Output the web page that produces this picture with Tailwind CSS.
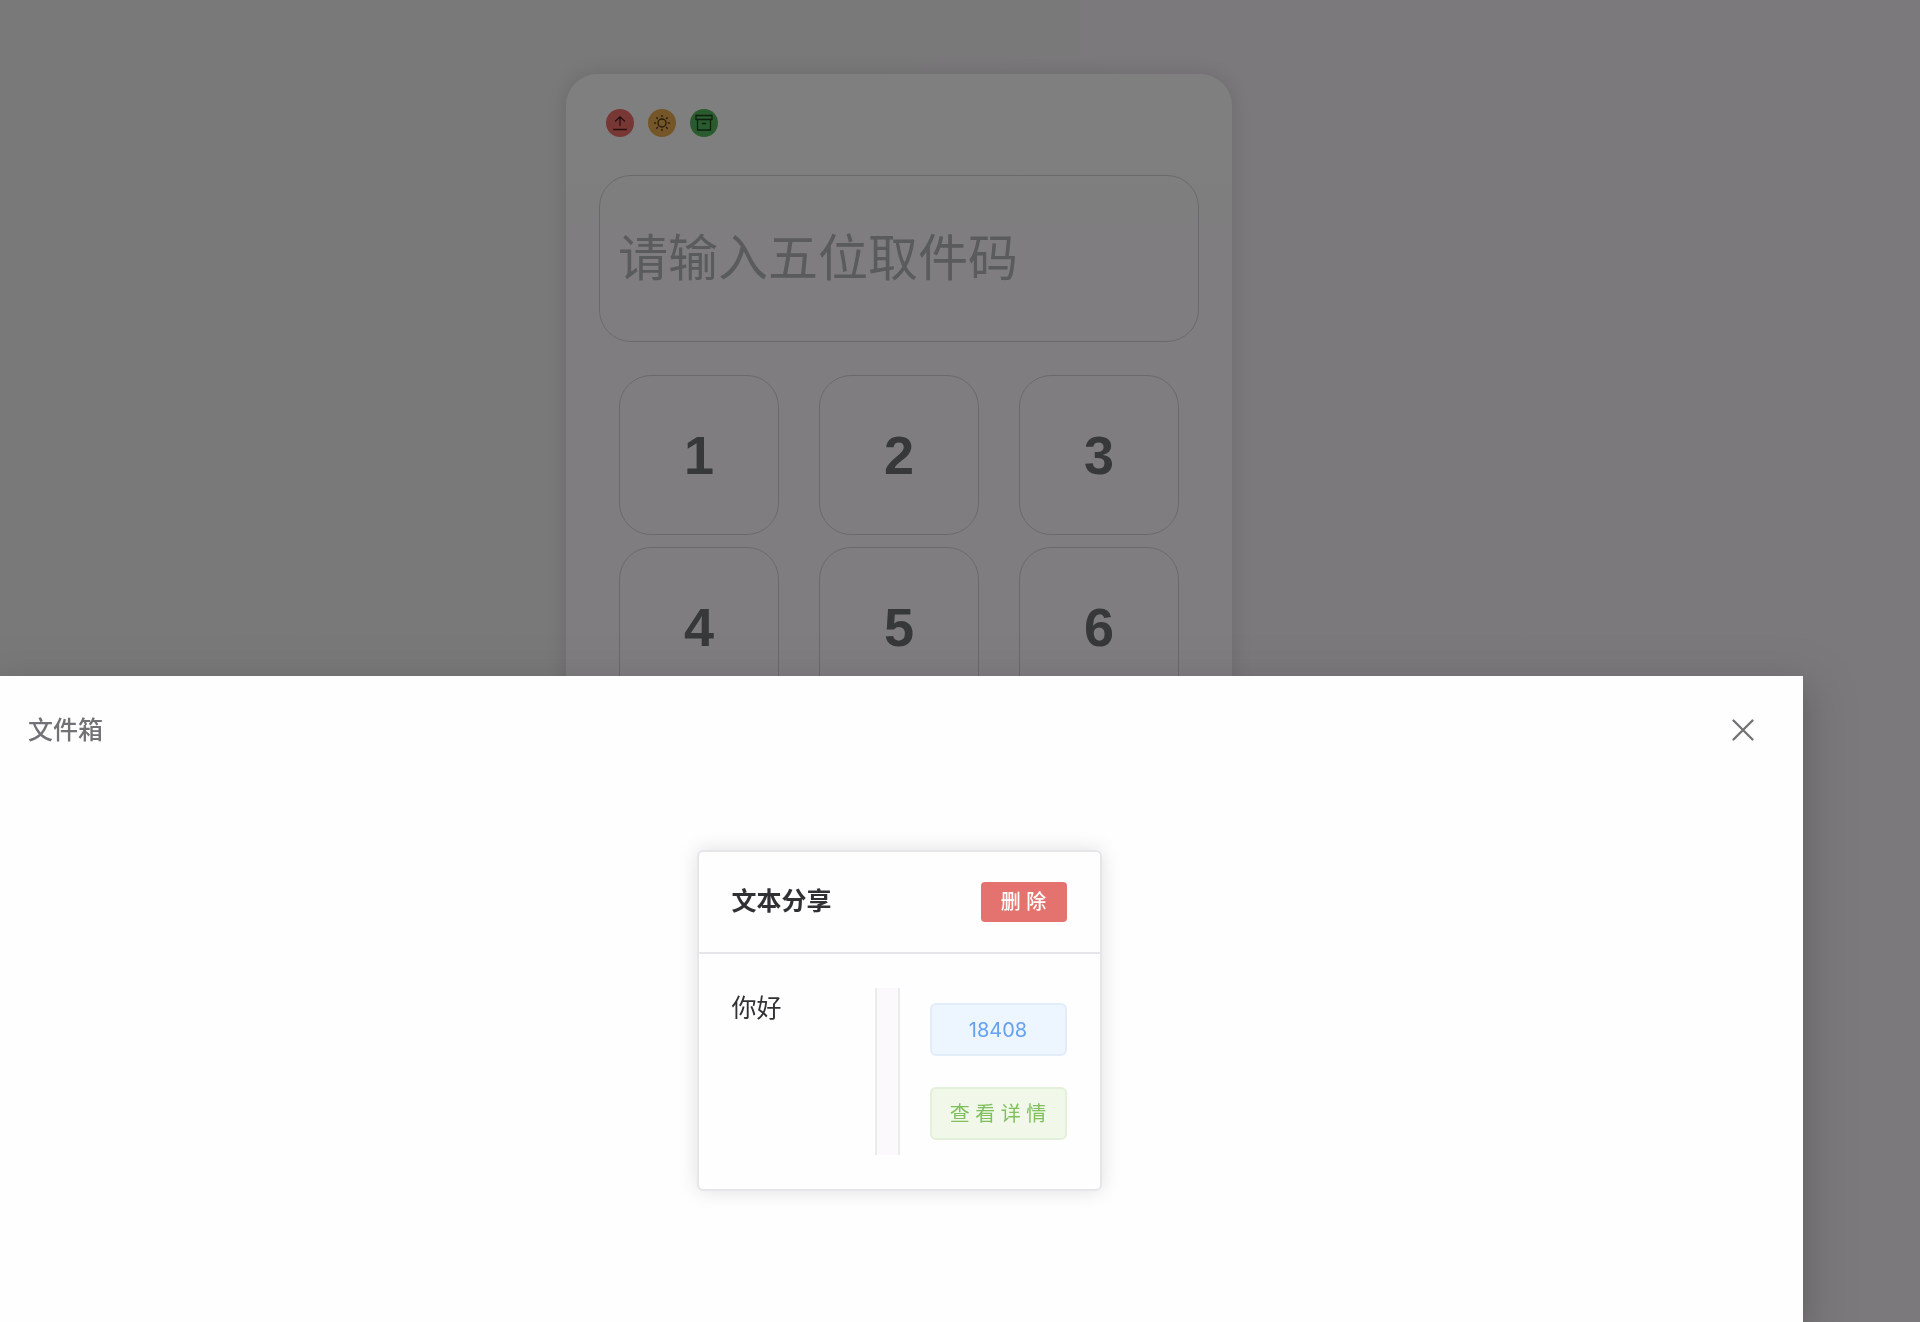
<!DOCTYPE html>
<html lang="zh-CN">

<head>
    <meta charset="UTF-8">
    <meta name="viewport" content="width=device-width, initial-scale=1.0">
    <title>文件箱</title>
    <script src="https://cdn.jsdelivr.net/npm/@tailwindcss/browser@4"></script>
</head>

<body class="h-screen overflow-hidden bg-linear-to-r from-[#f2f2f2] from-30% to-[#f7f2f7] to-70% font-['Liberation_Sans','Noto_Sans_CJK_SC',sans-serif] text-[#303133]">
    <!-- 取件面板 -->
    <main class="flex justify-center pt-[74px] pr-[122px]">
        <div class="w-[666px] rounded-[32px] bg-linear-to-b from-[#ffffff] from-10% to-[#fffbff] to-25% px-[33px] pt-[35px] pb-8 shadow-[0_0_20px_rgba(0,0,0,0.12)]">
            <div class="flex gap-[14px] px-[7px]">
                <button type="button" aria-label="上传" class="flex size-7 items-center justify-center rounded-full bg-[#ee6f69]">
                    <svg class="size-4" viewBox="0 0 16 16" fill="none" stroke="#50201f" stroke-width="1.3" stroke-linecap="round" stroke-linejoin="round">
                        <path d="M8 10.500V2M3.500 6 8 1.800 12.500 6M1.500 14.500h13" />
                    </svg>
                </button>
                <button type="button" aria-label="主题" class="flex size-7 items-center justify-center rounded-full bg-[#e8ad50]">
                    <svg class="size-4" viewBox="0 0 16 16" fill="none" stroke="#50361a" stroke-width="1.4" stroke-linecap="round">
                        <circle cx="8" cy="8" r="4" />
                        <path d="M8 .6v.9M8 14.500v.9M.6 8h.9M14.500 8h.9M2.800 2.800l.6.6M12.600 12.600l.6.6M13.200 2.800l-.6.6M3.400 12.600l-.6.6" />
                    </svg>
                </button>
                <button type="button" aria-label="文件箱" class="flex size-7 items-center justify-center rounded-full bg-[#52b75e]">
                    <svg class="size-[18px]" viewBox="0 0 18 18" fill="none" stroke="#1c3c1f" stroke-width="1.3" stroke-linecap="round" stroke-linejoin="round">
                        <path d="M1 1.500h16v4H1zM2.500 5.500v10.500h13V5.500M7.500 9.500h3" />
                    </svg>
                </button>
            </div>

            <input type="text" aria-label="取件码" placeholder="请输入五位取件码" class="mt-[38px] block h-[167px] w-full rounded-[32px] border border-[#d3d3d8] px-[18px] text-[50px] placeholder:text-[#b4b6ba]">

            <div class="mt-[33px] grid grid-cols-3 gap-x-10 gap-y-3 px-5 text-[54px] font-bold text-[#6f7175]">
                <button type="button" class="h-40 rounded-[32px] border border-[#d3d3d8]">1</button>
                <button type="button" class="h-40 rounded-[32px] border border-[#d3d3d8]">2</button>
                <button type="button" class="h-40 rounded-[32px] border border-[#d3d3d8]">3</button>
                <button type="button" class="h-40 rounded-[32px] border border-[#d3d3d8]">4</button>
                <button type="button" class="h-40 rounded-[32px] border border-[#d3d3d8]">5</button>
                <button type="button" class="h-40 rounded-[32px] border border-[#d3d3d8]">6</button>
            </div>
        </div>
    </main>

    <!-- 遮罩 -->
    <div class="fixed inset-0 bg-black/50"></div>

    <!-- 文件箱抽屉 -->
    <section class="fixed right-[117px] bottom-0 left-0 h-[646px] bg-[#fefefe] shadow-[0_16px_48px_16px_rgba(0,0,0,0.08),0_12px_32px_rgba(0,0,0,0.12),0_8px_16px_-8px_rgba(0,0,0,0.16)]">
        <header class="flex items-center justify-between pt-9 pr-[46px] pl-7 text-[#727276]">
            <h2 class="text-[25px] leading-9 font-medium">文件箱</h2>
            <button type="button" aria-label="关闭" class="flex size-7 items-center justify-center">
                <svg class="size-[22px]" viewBox="0 0 22 22" fill="none" stroke="currentColor" stroke-width="2.3" stroke-linecap="round">
                    <path d="M1.500 1.500l19 19M20.500 1.500l-19 19" />
                </svg>
            </button>
        </header>

        <div class="flex justify-center pt-[102px] pr-[5px]">
            <article class="w-[405px] rounded-md border-2 border-[#e6e5e9] shadow-[0_0_20px_rgba(0,0,0,0.12)]">
                <div class="flex h-[102px] items-center justify-between border-b-2 border-[#e6e5e9] px-[33px]">
                    <h3 class="text-[25px] font-bold">文本分享</h3>
                    <button type="button" class="h-10 w-[86px] rounded bg-[#e4736f] text-[20px] font-medium text-white">删 除</button>
                </div>
                <div class="flex px-[33px] py-[34px]">
                    <p class="flex-1 text-[25px] leading-10">你好</p>
                    <div class="w-[25px] border-x-2 border-[#ebebed] bg-[#fbf9fc]"></div>
                    <div class="ml-[30px] flex w-[137px] flex-col gap-[31px] py-[15px] text-[20px]">
                        <button type="button" class="h-[53px] rounded-md border-2 border-[#e3edfa] bg-[#edf5fe] font-['Inter',sans-serif] text-[#66a0ee]">18408</button>
                        <button type="button" class="h-[53px] rounded-md border-2 border-[#e3f0da] bg-[#f1f8ea] text-[#7fc05c]">查 看 详 情</button>
                    </div>
                </div>
            </article>
        </div>
    </section>
</body>

</html>
